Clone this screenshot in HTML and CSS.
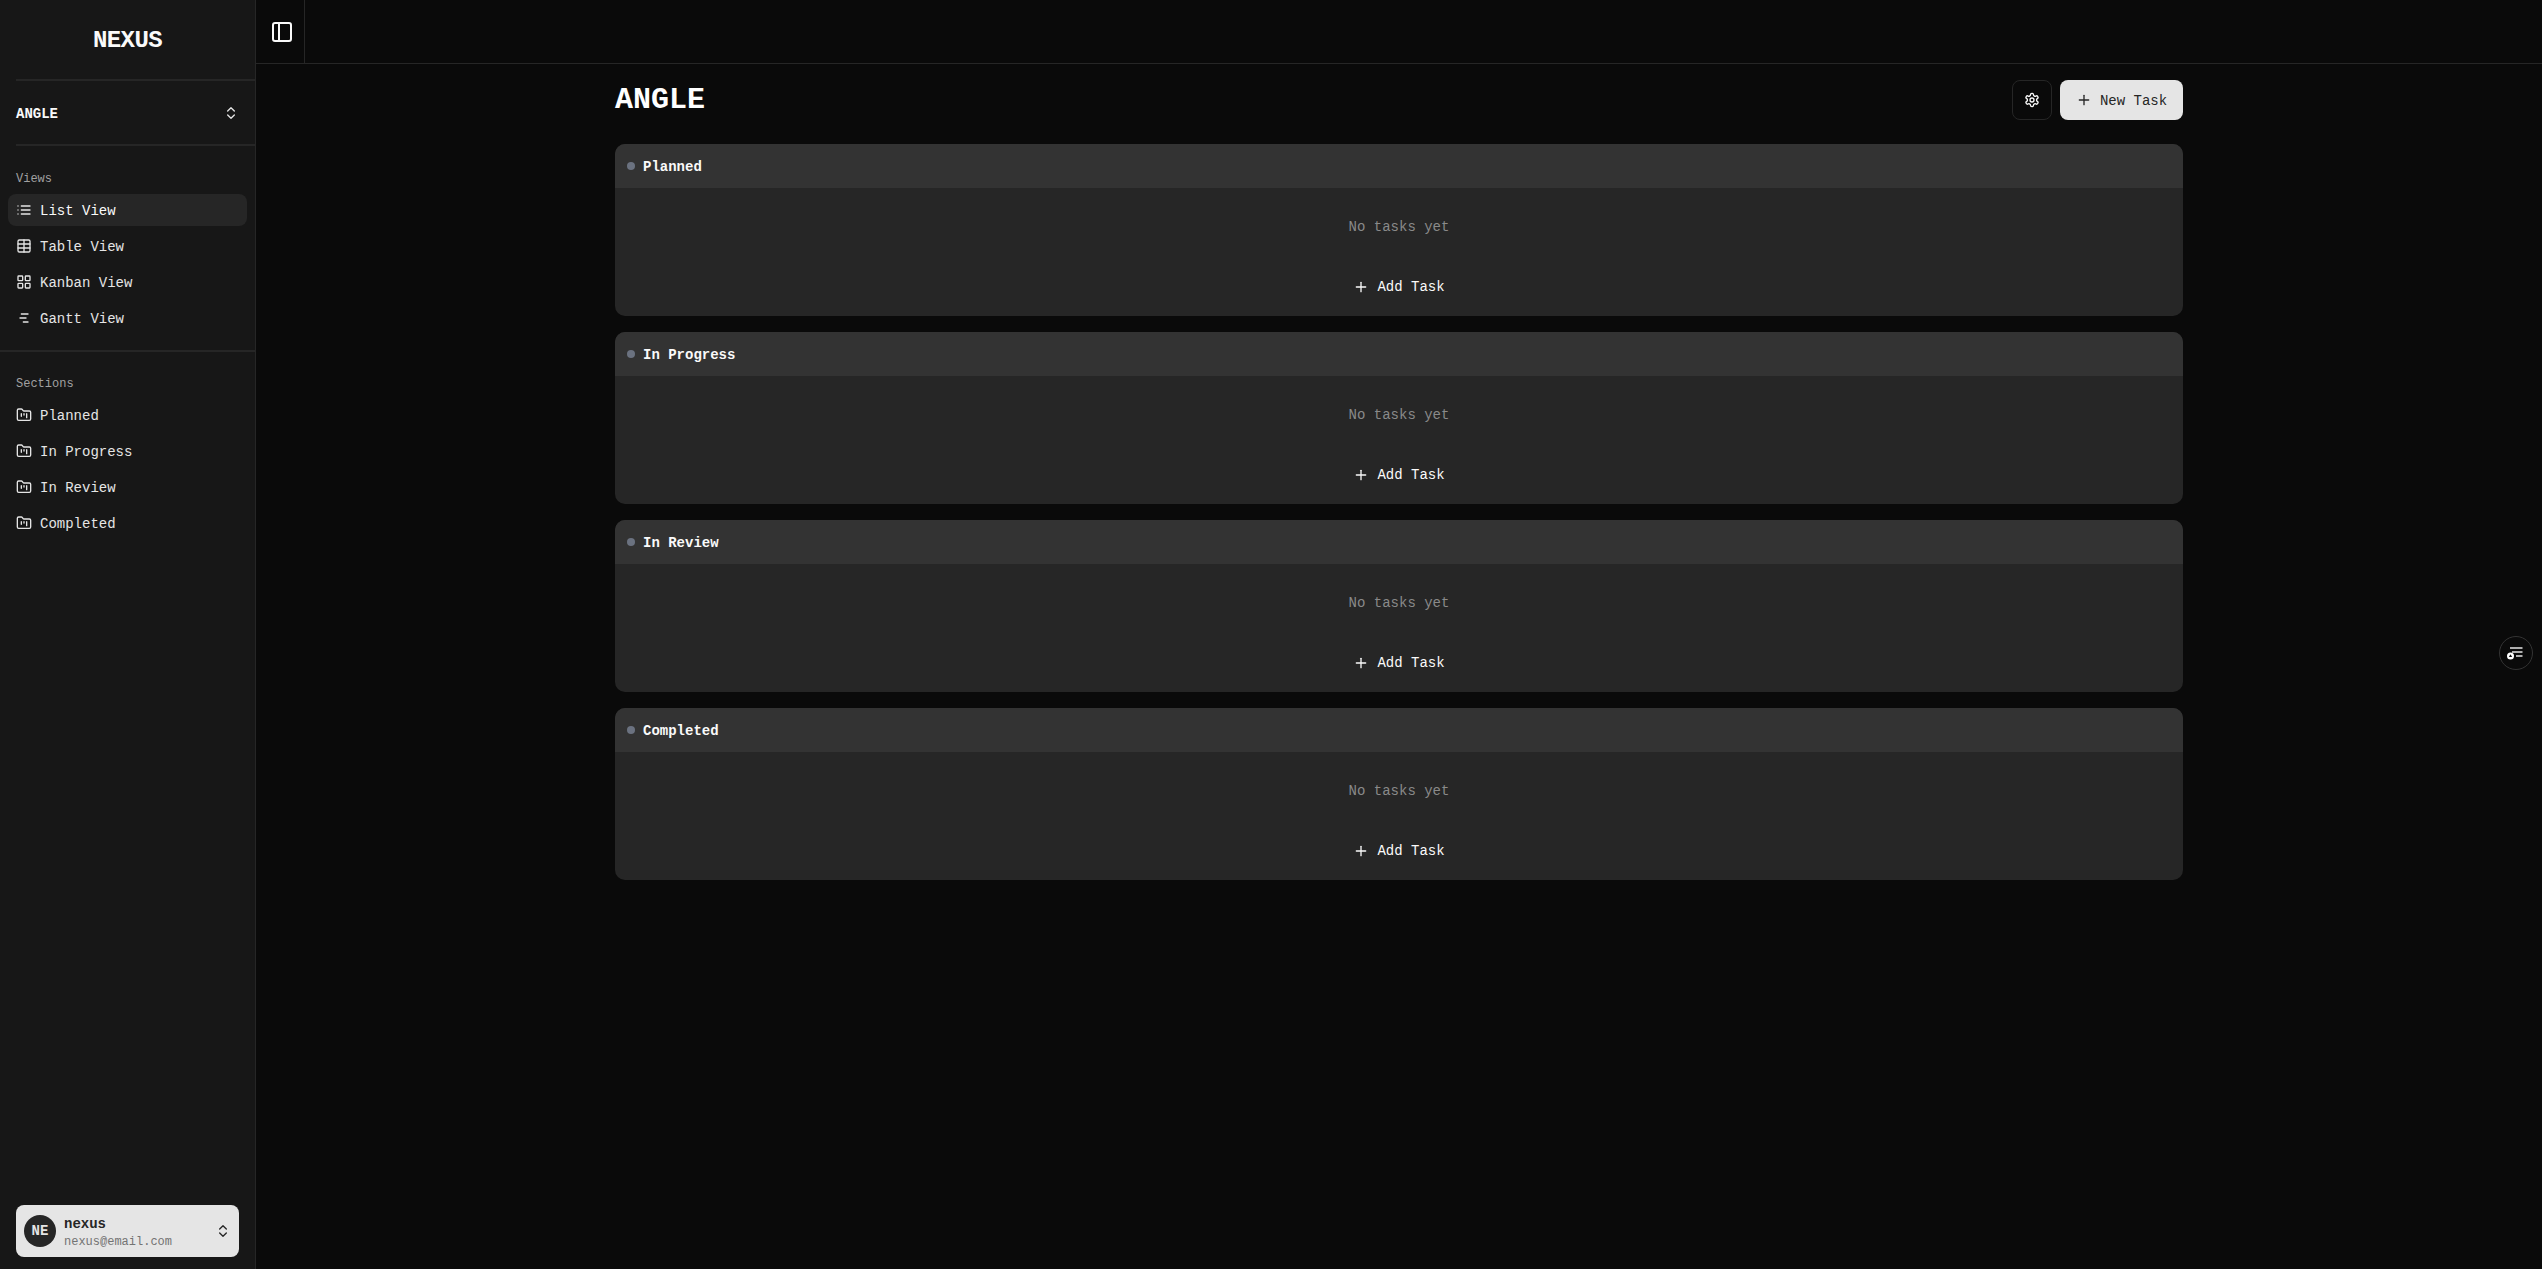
FILE: index.html
```html
<!DOCTYPE html>
<html lang="en">
<head>
<meta charset="utf-8">
<title>NEXUS</title>
<link rel="stylesheet" href="styles.css">
</head>
<body>
<svg class="sprite" aria-hidden="true">
  <symbol id="i-chevrons" viewBox="0 0 24 24"><path d="m7 15 5 5 5-5"/><path d="m7 9 5-5 5 5"/></symbol>
  <symbol id="i-list" viewBox="0 0 24 24"><path d="M3 12h.01"/><path d="M3 18h.01"/><path d="M3 6h.01"/><path d="M8 12h13"/><path d="M8 18h13"/><path d="M8 6h13"/></symbol>
  <symbol id="i-table" viewBox="0 0 24 24"><path d="M12 3v18"/><rect x="3" y="3" width="18" height="18" rx="2"/><path d="M3 9h18"/><path d="M3 15h18"/></symbol>
  <symbol id="i-grid" viewBox="0 0 24 24"><rect x="3" y="3" width="7" height="7" rx="1"/><rect x="14" y="3" width="7" height="7" rx="1"/><rect x="14" y="14" width="7" height="7" rx="1"/><rect x="3" y="14" width="7" height="7" rx="1"/></symbol>
  <symbol id="i-gantt" viewBox="0 0 24 24"><path d="M8 6h10"/><path d="M6 12h9"/><path d="M11 18h7"/></symbol>
  <symbol id="i-folder" viewBox="0 0 24 24"><path d="M4 20h16a2 2 0 0 0 2-2V8a2 2 0 0 0-2-2h-7.930a2 2 0 0 1-1.660-.9l-.82-1.200A2 2 0 0 0 7.930 3H4a2 2 0 0 0-2 2v13c0 1.100.9 2 2 2Z"/><path d="M8 10v4"/><path d="M12 10v2"/><path d="M16 10v6"/></symbol>
  <symbol id="i-panel" viewBox="0 0 24 24"><rect x="3" y="3" width="18" height="18" rx="2"/><path d="M9 3v18"/></symbol>
  <symbol id="i-plus" viewBox="0 0 24 24"><path d="M5 12h14"/><path d="M12 5v14"/></symbol>
  <symbol id="i-gear" viewBox="0 0 24 24"><path d="M12.220 2h-.44a2 2 0 0 0-2 2v.18a2 2 0 0 1-1 1.730l-.43.25a2 2 0 0 1-2 0l-.15-.08a2 2 0 0 0-2.730.73l-.22.38a2 2 0 0 0 .73 2.730l.15.1a2 2 0 0 1 1 1.720v.51a2 2 0 0 1-1 1.740l-.15.09a2 2 0 0 0-.73 2.730l.22.38a2 2 0 0 0 2.730.73l.15-.08a2 2 0 0 1 2 0l.43.25a2 2 0 0 1 1 1.730V20a2 2 0 0 0 2 2h.44a2 2 0 0 0 2-2v-.18a2 2 0 0 1 1-1.730l.43-.25a2 2 0 0 1 2 0l.15.08a2 2 0 0 0 2.730-.73l.22-.39a2 2 0 0 0-.73-2.730l-.15-.08a2 2 0 0 1-1-1.740v-.5a2 2 0 0 1 1-1.740l.15-.09a2 2 0 0 0 .73-2.730l-.22-.38a2 2 0 0 0-2.730-.73l-.15.08a2 2 0 0 1-2 0l-.43-.25a2 2 0 0 1-1-1.730V4a2 2 0 0 0-2-2z"/><circle cx="12" cy="12" r="3"/></symbol>
</svg>
<div class="app">
  <aside class="sidebar">
    <div class="logo">NEXUS</div>
    <div class="project">
      <span>ANGLE</span>
      <svg class="icon chev"><use href="#i-chevrons"/></svg>
    </div>
    <section class="group views">
      <div class="group-label">Views</div>
      <nav class="menu">
        <a class="item active"><svg class="icon"><use href="#i-list"/></svg>List View</a>
        <a class="item"><svg class="icon"><use href="#i-table"/></svg>Table View</a>
        <a class="item"><svg class="icon"><use href="#i-grid"/></svg>Kanban View</a>
        <a class="item"><svg class="icon"><use href="#i-gantt"/></svg>Gantt View</a>
      </nav>
    </section>
    <section class="group sections">
      <div class="group-label">Sections</div>
      <nav class="menu">
        <a class="item"><svg class="icon"><use href="#i-folder"/></svg>Planned</a>
        <a class="item"><svg class="icon"><use href="#i-folder"/></svg>In Progress</a>
        <a class="item"><svg class="icon"><use href="#i-folder"/></svg>In Review</a>
        <a class="item"><svg class="icon"><use href="#i-folder"/></svg>Completed</a>
      </nav>
    </section>
    <div class="user">
      <div class="avatar">NE</div>
      <div class="user-text">
        <div class="user-name">nexus</div>
        <div class="user-mail">nexus@email.com</div>
      </div>
      <svg class="icon chev"><use href="#i-chevrons"/></svg>
    </div>
  </aside>
  <main class="main">
    <header class="topbar">
      <div class="toggle"><svg class="icon-panel"><use href="#i-panel"/></svg></div>
    </header>
    <div class="content">
      <div class="toolbar">
        <h1 class="title">ANGLE</h1>
        <div class="actions">
          <button class="btn-icon"><svg class="icon"><use href="#i-gear"/></svg></button>
          <button class="btn-primary"><svg class="icon"><use href="#i-plus"/></svg>New Task</button>
        </div>
      </div>
      <div class="cards">
        <article class="card">
          <div class="card-head"><span class="dot"></span>Planned</div>
          <div class="card-body">
            <div class="empty">No tasks yet</div>
            <button class="add"><svg class="icon"><use href="#i-plus"/></svg>Add Task</button>
          </div>
        </article>
        <article class="card">
          <div class="card-head"><span class="dot"></span>In Progress</div>
          <div class="card-body">
            <div class="empty">No tasks yet</div>
            <button class="add"><svg class="icon"><use href="#i-plus"/></svg>Add Task</button>
          </div>
        </article>
        <article class="card">
          <div class="card-head"><span class="dot"></span>In Review</div>
          <div class="card-body">
            <div class="empty">No tasks yet</div>
            <button class="add"><svg class="icon"><use href="#i-plus"/></svg>Add Task</button>
          </div>
        </article>
        <article class="card">
          <div class="card-head"><span class="dot"></span>Completed</div>
          <div class="card-body">
            <div class="empty">No tasks yet</div>
            <button class="add"><svg class="icon"><use href="#i-plus"/></svg>Add Task</button>
          </div>
        </article>
      </div>
    </div>
    <button class="float">
      <svg viewBox="0 0 16 16" class="float-icon">
        <path d="M2 3h12.500M4 7h10.500M8 11h6.500"/>
        <circle class="float-dot" cx="2.500" cy="11" r="3.500"/>
        <path class="float-tri" d="M2.500 9.200 4.200 12H.8Z"/>
      </svg>
    </button>
  </main>
</div>
</body>
</html>
```
FILE: styles.css
```css
* { box-sizing: border-box; }
html, body { margin: 0; height: 100%; }
body {
  background: #0a0a0a;
  color: #fafafa;
  font-family: "Liberation Mono", monospace;
  font-size: 14px;
  overflow: hidden;
}
.sprite { display: none; }
.app { display: flex; height: 1269px; }

.sidebar {
  width: 256px;
  flex: none;
  display: flex;
  flex-direction: column;
  background: #171717;
  border-right: 1px solid #262626;
}
.logo {
  height: 81px;
  margin-left: 16px;
  padding: 25px 16px 0 0;
  text-align: center;
  font-size: 24px;
  line-height: 32px;
  font-weight: 700;
  letter-spacing: -0.6px;
  border-bottom: 2px solid #262626;
}
.project {
  height: 65px;
  margin-left: 16px;
  padding-right: 16px;
  display: flex;
  align-items: center;
  justify-content: space-between;
  font-size: 14px;
  font-weight: 700;
  border-bottom: 2px solid #262626;
}
.project span { padding-top: 2px; }
.icon {
  width: 16px;
  height: 16px;
  flex: none;
  fill: none;
  stroke: currentColor;
  stroke-width: 2;
  stroke-linecap: round;
  stroke-linejoin: round;
}
.chev { color: #e5e5e5; }
.group { padding: 0 8px; }
.views { padding-top: 24px; padding-bottom: 16px; }
.sections { padding-top: 23px; border-top: 2px solid #262626; }
.group-label {
  padding-left: 8px;
  height: 24px;
  line-height: 18px;
  font-size: 12px;
  color: #a1a1a1;
}
.menu { display: flex; flex-direction: column; gap: 4px; }
.item {
  height: 32px;
  display: flex;
  align-items: center;
  gap: 8px;
  padding: 2px 8px 0;
  border-radius: 8px;
  color: #e5e5e5;
}
.item .icon { color: #e5e5e5; margin-top: -2px; }
.active { background: #262626; color: #fafafa; }

.user {
  margin: auto 16px 12px;
  height: 52px;
  display: flex;
  align-items: center;
  gap: 8px;
  padding: 0 8px;
  background: #e5e5e5;
  border-radius: 8px;
  color: #262626;
}
.avatar {
  width: 32px;
  height: 32px;
  flex: none;
  border-radius: 50%;
  background: #262626;
  color: #e5e5e5;
  display: flex;
  align-items: center;
  justify-content: center;
  font-size: 14px;
  font-weight: 700;
}
.user-text { flex: 1; min-width: 0; padding-top: 3px; }
.user-name { font-size: 14px; line-height: 18px; font-weight: 700; }
.user-mail { font-size: 12px; line-height: 18px; color: #737373; }
.user .chev { color: #262626; }

.main { flex: 1; min-width: 0; position: relative; }
.topbar { height: 64px; border-bottom: 1px solid #262626; }
.toggle {
  width: 49px;
  height: 63px;
  display: flex;
  align-items: center;
  justify-content: center;
  padding: 0 0 0 3px;
  border-right: 1px solid #262626;
}
.icon-panel {
  width: 24px;
  height: 24px;
  fill: none;
  stroke: #fafafa;
  stroke-width: 2;
  stroke-linecap: round;
  stroke-linejoin: round;
}
.content { width: 1568px; margin: 0 auto; padding-top: 16px; }
.toolbar {
  height: 40px;
  margin-bottom: 24px;
  display: flex;
  align-items: center;
  justify-content: space-between;
}
.title {
  margin: 0;
  font-size: 30px;
  line-height: 36px;
  font-weight: 700;
  color: #fff;
}
.actions { display: flex; gap: 8px; }
.btn-icon {
  width: 40px;
  height: 40px;
  display: flex;
  align-items: center;
  justify-content: center;
  background: #0a0a0a;
  color: #fafafa;
  border: 1px solid #262626;
  border-radius: 8px;
  padding: 0;
}
.btn-primary {
  width: 123px;
  height: 40px;
  display: flex;
  align-items: center;
  justify-content: center;
  gap: 8px;
  background: #e5e5e5;
  color: #262626;
  border: 0;
  border-radius: 8px;
  padding: 1px 0 0;
  font: inherit;
}
.btn-primary .icon { margin-top: -1px; }
.cards { display: flex; flex-direction: column; gap: 16px; }
.card {
  height: 172px;
  background: #262626;
  border-radius: 10px;
  overflow: hidden;
}
.card-head {
  height: 44px;
  background: #333;
  display: flex;
  align-items: center;
  gap: 8px;
  padding: 1px 0 0 12px;
  font-weight: 700;
  color: #fafafa;
}
.dot { width: 8px; height: 8px; border-radius: 50%; background: #6b7280; margin-top: -1px; }
.card-body {
  display: flex;
  flex-direction: column;
  align-items: center;
}
.empty {
  height: 76px;
  padding-top: 1px;
  display: flex;
  align-items: center;
  color: #8a8a8a;
}
.add {
  height: 46px;
  display: flex;
  align-items: center;
  gap: 8px;
  background: none;
  border: 0;
  padding: 0;
  font: inherit;
  color: #fafafa;
}
.float {
  position: absolute;
  left: 2243px;
  top: 636px;
  width: 34px;
  height: 34px;
  border-radius: 50%;
  background: #0a0a0a;
  border: 1px solid #333;
  padding: 0;
  display: flex;
  align-items: center;
  justify-content: center;
}
.float-icon {
  width: 16px;
  height: 16px;
  overflow: visible;
  fill: none;
  stroke: #e5e5e5;
  stroke-width: 1.500;
}
.float-dot { fill: #fff; stroke: none; }
.float-tri { fill: #0a0a0a; stroke: none; }
```
